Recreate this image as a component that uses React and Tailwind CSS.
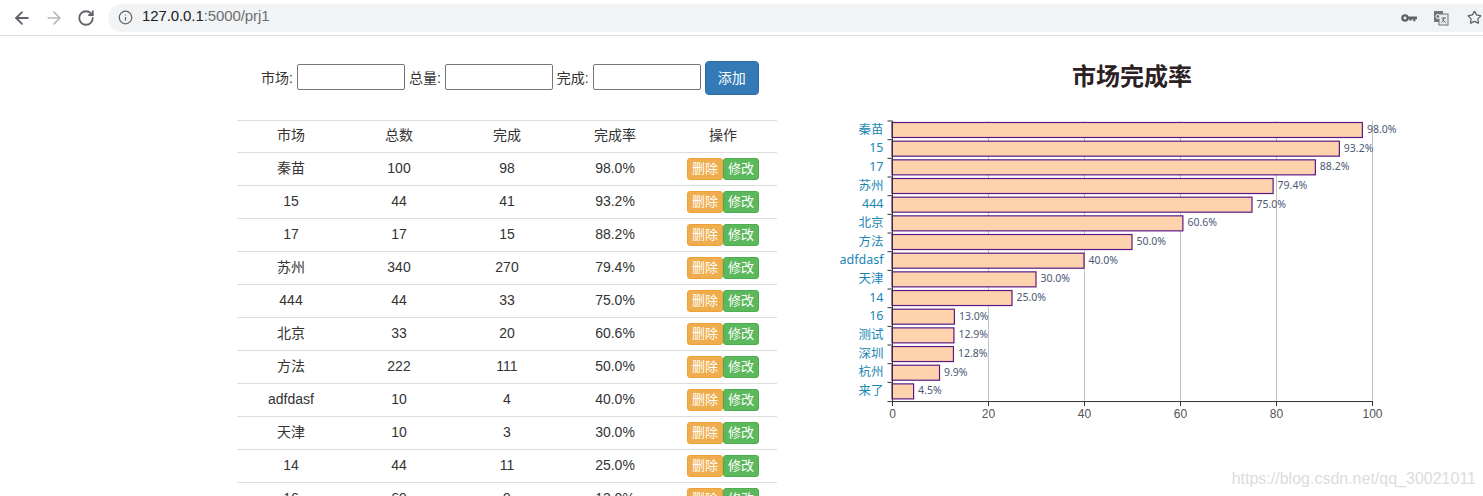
import React from "react";
import { ArrowLeft, ArrowRight, RotateCw, Info, Star } from "lucide-react";

const ROWS = [
  ["秦苗", 100, 98, "98.0%"],
  ["15", 44, 41, "93.2%"],
  ["17", 17, 15, "88.2%"],
  ["苏州", 340, 270, "79.4%"],
  ["444", 44, 33, "75.0%"],
  ["北京", 33, 20, "60.6%"],
  ["方法", 222, 111, "50.0%"],
  ["adfdasf", 10, 4, "40.0%"],
  ["天津", 10, 3, "30.0%"],
  ["14", 44, 11, "25.0%"],
  ["16", 69, 9, "13.0%"],
];

const BARS = [
  ["秦苗", 98.0],
  ["15", 93.2],
  ["17", 88.2],
  ["苏州", 79.4],
  ["444", 75.0],
  ["北京", 60.6],
  ["方法", 50.0],
  ["adfdasf", 40.0],
  ["天津", 30.0],
  ["14", 25.0],
  ["16", 13.0],
  ["测试", 12.9],
  ["深圳", 12.8],
  ["杭州", 9.9],
  ["来了", 4.5],
];

const CHART_FONT = '"Noto Sans", "Noto Sans CJK SC", sans-serif';
const AXIS_FONT = '"Liberation Sans", sans-serif';

const Chart = () => {
  const x0 = 63.5;
  const scale = 4.8;
  const top = 16;
  const band = 18.67;
  const bottom = top + band * 15;

  return (
    <svg width="620" height="320" className="block" style={{ fontFamily: CHART_FONT }}>
      {[20, 40, 60, 80, 100].map((v) => (
        <line key={v} x1={x0 + v * scale} x2={x0 + v * scale} y1={top} y2={bottom} stroke="#c4c4c4" />
      ))}
      {BARS.map(([name, v], i) => {
        const y = top + band * i;
        return (
          <g key={name}>
            <rect x={x0 - 0.5} y={y + 1.5} width={v * scale} height={15} fill="#fdd2ac" stroke="#5b1a85" strokeWidth="1.2" />
            <line x1={x0 - 5} x2={x0} y1={y} y2={y} stroke="#333" />
            <text x={x0 - 9} y={y + 12.5} textAnchor="end" fontSize="12.5" fill="#1a87b5">
              {name}
            </text>
            <text x={x0 + v * scale + 4} y={y + 12} fontSize="10.5" fill="#4a5873">
              {v.toFixed(1)}%
            </text>
          </g>
        );
      })}
      <line x1={x0} x2={x0} y1={top} y2={bottom} stroke="#333" />
      <line x1={x0 - 5} x2={x0 + 480} y1={bottom + 0.5} y2={bottom + 0.5} stroke="#333" />
      {[0, 20, 40, 60, 80, 100].map((v) => (
        <g key={v}>
          <line x1={x0 + v * scale} x2={x0 + v * scale} y1={bottom} y2={bottom + 5} stroke="#333" />
          <text x={x0 + v * scale} y={bottom + 17} textAnchor="middle" fontSize="12" fill="#555" style={{ fontFamily: AXIS_FONT }}>
            {v}
          </text>
        </g>
      ))}
    </svg>
  );
};

const App = () => {
  return (
    <div className="h-[496px] overflow-hidden bg-white text-[14px] text-[#333] relative font-['Liberation_Sans','Noto_Sans_CJK_SC',sans-serif]">
      {/* browser bar */}
      <div className="h-9 flex items-center border-b border-[#dadada] pl-3">
        <ArrowLeft size={20} strokeWidth={2.2} className="text-[#5f6368]" />
        <ArrowRight size={20} strokeWidth={2} className="text-[#b4b6b9] ml-[12px]" />
        <RotateCw size={18} strokeWidth={2.4} className="text-[#5f6368] ml-[13px]" />
        <div className="ml-[13px] flex-1 h-[28px] rounded-l-full bg-[#f1f3f4] flex items-center pl-[10px] pr-[1px]">
          <Info size={15} strokeWidth={2} className="text-[#5f6368]" />
          <span className="ml-[9px] pb-[2px] text-[15px] tracking-[-0.1px] text-[#202124]">
            127.0.0.1<span className="text-[#6b6e72]">:5000/prj1</span>
          </span>
          <div className="ml-auto flex items-center">
            <svg width="18" height="18" viewBox="0 0 18 18" className="text-[#5f6368]">
              <path fill="currentColor" d="M5 5.2a3.8 3.8 0 1 1 0 7.6 3.8 3.8 0 0 1 0-7.6zm0 2.4a1.4 1.4 0 1 0 0 2.8 1.4 1.4 0 0 0 0-2.8zM8 7.6h9v2.6h-1.6v2h-2.2v-2h-1.4v1.4H9.4v-1.4H8z" />
            </svg>
            <svg width="16" height="16" viewBox="0 0 16 16" className="ml-[15px]">
              <rect x="1" y="1" width="9" height="11" fill="#70757a" />
              <rect x="6" y="4" width="9" height="11" fill="#e8eaed" stroke="#70757a" />
              <circle cx="5" cy="6.5" r="2" fill="none" stroke="#fff" />
              <path d="M8.5 8h4.5M11 8c-.3 2-1.2 3.5-2.5 4.5M9.5 9.5c.6 1.3 1.8 2.4 3.2 3" fill="none" stroke="#5f6368" />
            </svg>
            <Star size={15} strokeWidth={2} className="text-[#5f6368] ml-[18px]" />
          </div>
        </div>
      </div>

      <div className="flex">
        {/* form and table */}
        <div className="ml-[237px] w-[540px] shrink-0">
          <div className="mt-[25px] ml-[24px] flex items-center h-[34px]">
            <span>市场:</span>
            <input className="ml-[4px] mb-[2px] w-[108px] h-[26px] border border-[#767676] rounded-[2px]" />
            <span className="ml-[4px]">总量:</span>
            <input className="ml-[4px] mb-[2px] w-[108px] h-[26px] border border-[#767676] rounded-[2px]" />
            <span className="ml-[4px]">完成:</span>
            <input className="ml-[4px] mb-[2px] w-[108px] h-[26px] border border-[#767676] rounded-[2px]" />
            <button className="ml-[4px] w-[54px] h-[34px] bg-[#337ab7] border border-[#2e6da4] rounded text-white text-[14px]">
              添加
            </button>
          </div>

          <table className="mt-[25px] w-[540px] table-fixed border-collapse text-center">
            <thead>
              <tr className="h-[32px] border-y border-[#dddddd]">
                {["市场", "总数", "完成", "完成率", "操作"].map((h) => (
                  <th key={h} className="font-normal pb-[2px]">
                    {h}
                  </th>
                ))}
              </tr>
            </thead>
            <tbody>
              {ROWS.map((r) => (
                <tr key={r[0]} className="h-[33px] border-b border-[#dddddd]">
                  <td className="pb-[2px]">{r[0]}</td>
                  <td className="pb-[2px]">{r[1]}</td>
                  <td className="pb-[2px]">{r[2]}</td>
                  <td className="pb-[2px]">{r[3]}</td>
                  <td>
                    <div className="flex justify-center">
                      <button className="w-[36px] h-[22px] bg-[#f0ad4e] border border-[#eea236] rounded-[3px] text-white text-[13px]">
                        删除
                      </button>
                      <button className="w-[36px] h-[22px] bg-[#5cb85c] border border-[#4cae4c] rounded-[3px] text-white text-[13px]">
                        修改
                      </button>
                    </div>
                  </td>
                </tr>
              ))}
            </tbody>
          </table>
        </div>

        {/* chart */}
        <div className="ml-[52px] w-[620px] shrink-0">
          <h2 className="mt-[26px] h-[29px] w-[606px] text-center text-[24px] leading-[29px] font-bold text-[#2b2024]">
            市场完成率
          </h2>
          <div className="mt-[14px]">
            <Chart />
          </div>
        </div>
      </div>

      <div className="absolute right-[7px] top-[467px] text-[16px] text-[#dcdcdc]">
        https://blog.csdn.net/qq_30021011
      </div>
    </div>
  );
};

export default App;
